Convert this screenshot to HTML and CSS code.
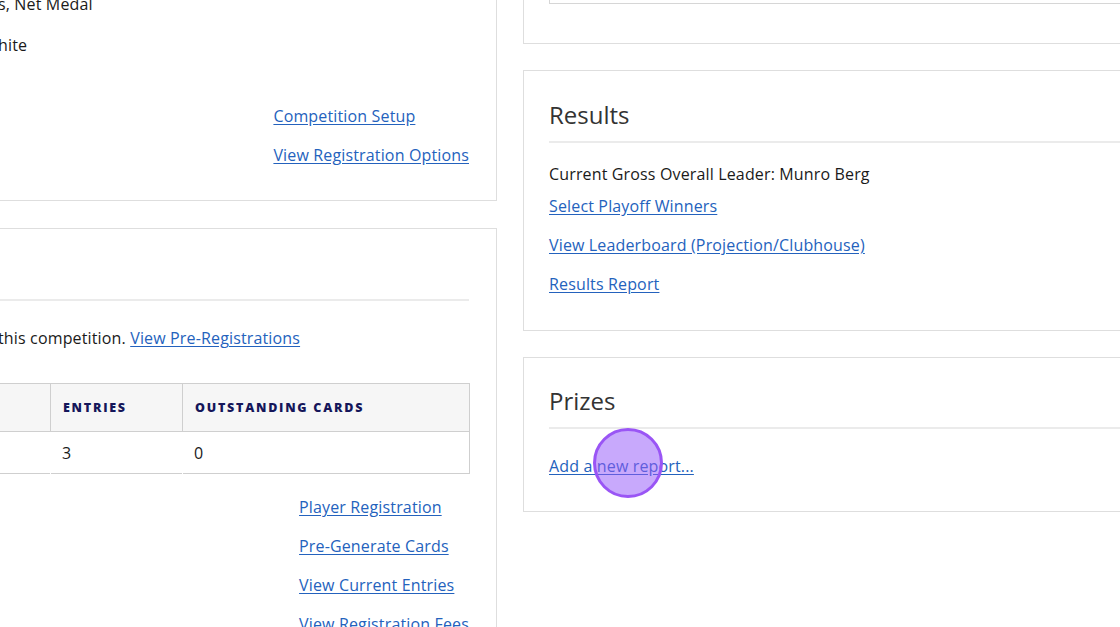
FILE: index.html
```html
<!DOCTYPE html>
<html lang="en">
<head>
<meta charset="utf-8">
<title>Competition</title>
<link rel="stylesheet" href="styles.css">
</head>
<body>
<div class="page">
  <div class="col col-left">
    <section class="card card-info">
      <p class="info-line">s, Net Medal</p>
      <p class="info-line">hite</p>
      <div class="links">
        <a href="#">Competition Setup</a>
        <a href="#">View Registration Options</a>
      </div>
    </section>
    <section class="card">
      <h2 class="card-title">&nbsp;</h2>
      <p class="lead">this competition. <a href="#">View Pre-Registrations</a></p>
      <table class="entries">
        <thead>
          <tr><th class="c1"></th><th class="c2">Entries</th><th class="c3">Outstanding Cards</th></tr>
        </thead>
        <tbody>
          <tr><td></td><td>3</td><td>0</td></tr>
        </tbody>
      </table>
      <div class="links links-reg">
        <a href="#">Player Registration</a>
        <a href="#">Pre-Generate Cards</a>
        <a href="#">View Current Entries</a>
        <a href="#">View Registration Fees</a>
      </div>
    </section>
  </div>
  <div class="col col-right">
    <section class="card card-top">
      <div class="inner-box"></div>
    </section>
    <section class="card card-results">
      <h2 class="card-title">Results</h2>
      <p class="leader">Current Gross Overall Leader: Munro Berg</p>
      <div class="links links-plain">
        <a href="#">Select Playoff Winners</a>
        <a href="#">View Leaderboard (Projection/Clubhouse)</a>
        <a href="#">Results Report</a>
      </div>
    </section>
    <section class="card card-prizes">
      <h2 class="card-title">Prizes</h2>
      <div class="links links-plain">
        <a href="#">Add a new report...</a>
      </div>
    </section>
  </div>
</div>
<div class="click-marker"></div>
</body>
</html>
```
FILE: styles.css
```css
html, body {
  margin: 0;
  padding: 0;
  background: #ffffff;
  overflow: hidden;
  height: 627px;
}
body {
  font-family: "Open Sans", "Liberation Sans", sans-serif;
  font-size: 16px;
  line-height: 24px;
  letter-spacing: 0.15px;
  color: #1a1a1a;
  position: relative;
}
.page {
  display: flex;
  gap: 26px;
  margin-left: -30px;
  align-items: flex-start;
}
.col {
  display: flex;
  flex-direction: column;
}
.col-left {
  width: 527px;
  flex: none;
  gap: 27px;
  margin-top: -40px;
}
.col-right {
  width: 660px;
  flex: none;
  gap: 26px;
  margin-top: -60px;
}
.card {
  border: 1px solid #dedede;
  background: #fff;
  padding: 27px 27px 34px;
  display: flex;
  flex-direction: column;
}
.col-right .card {
  padding-left: 25px;
}
.card-info {
  padding-top: 31px;
  padding-bottom: 33px;
}
.info-line {
  margin: 0 0 17px;
}
.info-line + .info-line {
  margin-bottom: 0;
}
.card-info .links {
  margin-top: 47px;
}
.links {
  display: flex;
  flex-direction: column;
  gap: 15px;
  align-self: flex-end;
  align-items: flex-start;
}
.links-plain {
  align-self: flex-start;
}
a {
  color: #2462bd;
  text-decoration: underline;
  text-underline-offset: 2px;
}
.card-title {
  margin: 0;
  font-size: 24px;
  line-height: 34px;
  font-weight: 400;
  letter-spacing: 0;
  color: #333;
  padding-bottom: 9px;
  border-bottom: 2px solid #ebebeb;
}
.lead {
  margin: 25px 0 0;
}
.entries {
  margin-top: 33px;
  width: 472px;
  border-collapse: collapse;
  border: 1px solid #cfcfcf;
  table-layout: fixed;
}
.entries th {
  background: #f6f6f6;
  height: 47px;
  padding: 0 12px;
  text-align: left;
  font-size: 12.5px;
  font-weight: 800;
  letter-spacing: 1.75px;
  text-transform: uppercase;
  color: #15165a;
  border: 1px solid #cfcfcf;
}
.entries td {
  height: 41px;
  padding: 0 11px;
  border-top: 1px solid #cfcfcf;
  border-left: 1px solid transparent;
}
.entries .c1 { width: 51px; padding: 0; }
.entries .c2 { width: 107px; }
.links-reg {
  margin-top: 21px;
}
.card-top {
  padding-top: 20px;
  padding-bottom: 39px;
}
.inner-box {
  height: 43px;
  border: 1px solid #d6d6d6;
  border-top: none;
  box-sizing: border-box;
  margin-right: -60px;
}
.leader {
  margin: 19px 0 0;
}
.card-results .links {
  margin-top: 8px;
}
.card-prizes {
  padding-bottom: 33px;
}
.card-prizes .card-title {
  margin-top: -1px;
}
.card-prizes .links {
  margin-top: 25px;
}
.click-marker {
  position: absolute;
  left: 593px;
  top: 428px;
  width: 70px;
  height: 70px;
  box-sizing: border-box;
  border-radius: 50%;
  border: 3px solid #9a55f5;
  background: rgba(150, 90, 250, 0.52);
}
```
